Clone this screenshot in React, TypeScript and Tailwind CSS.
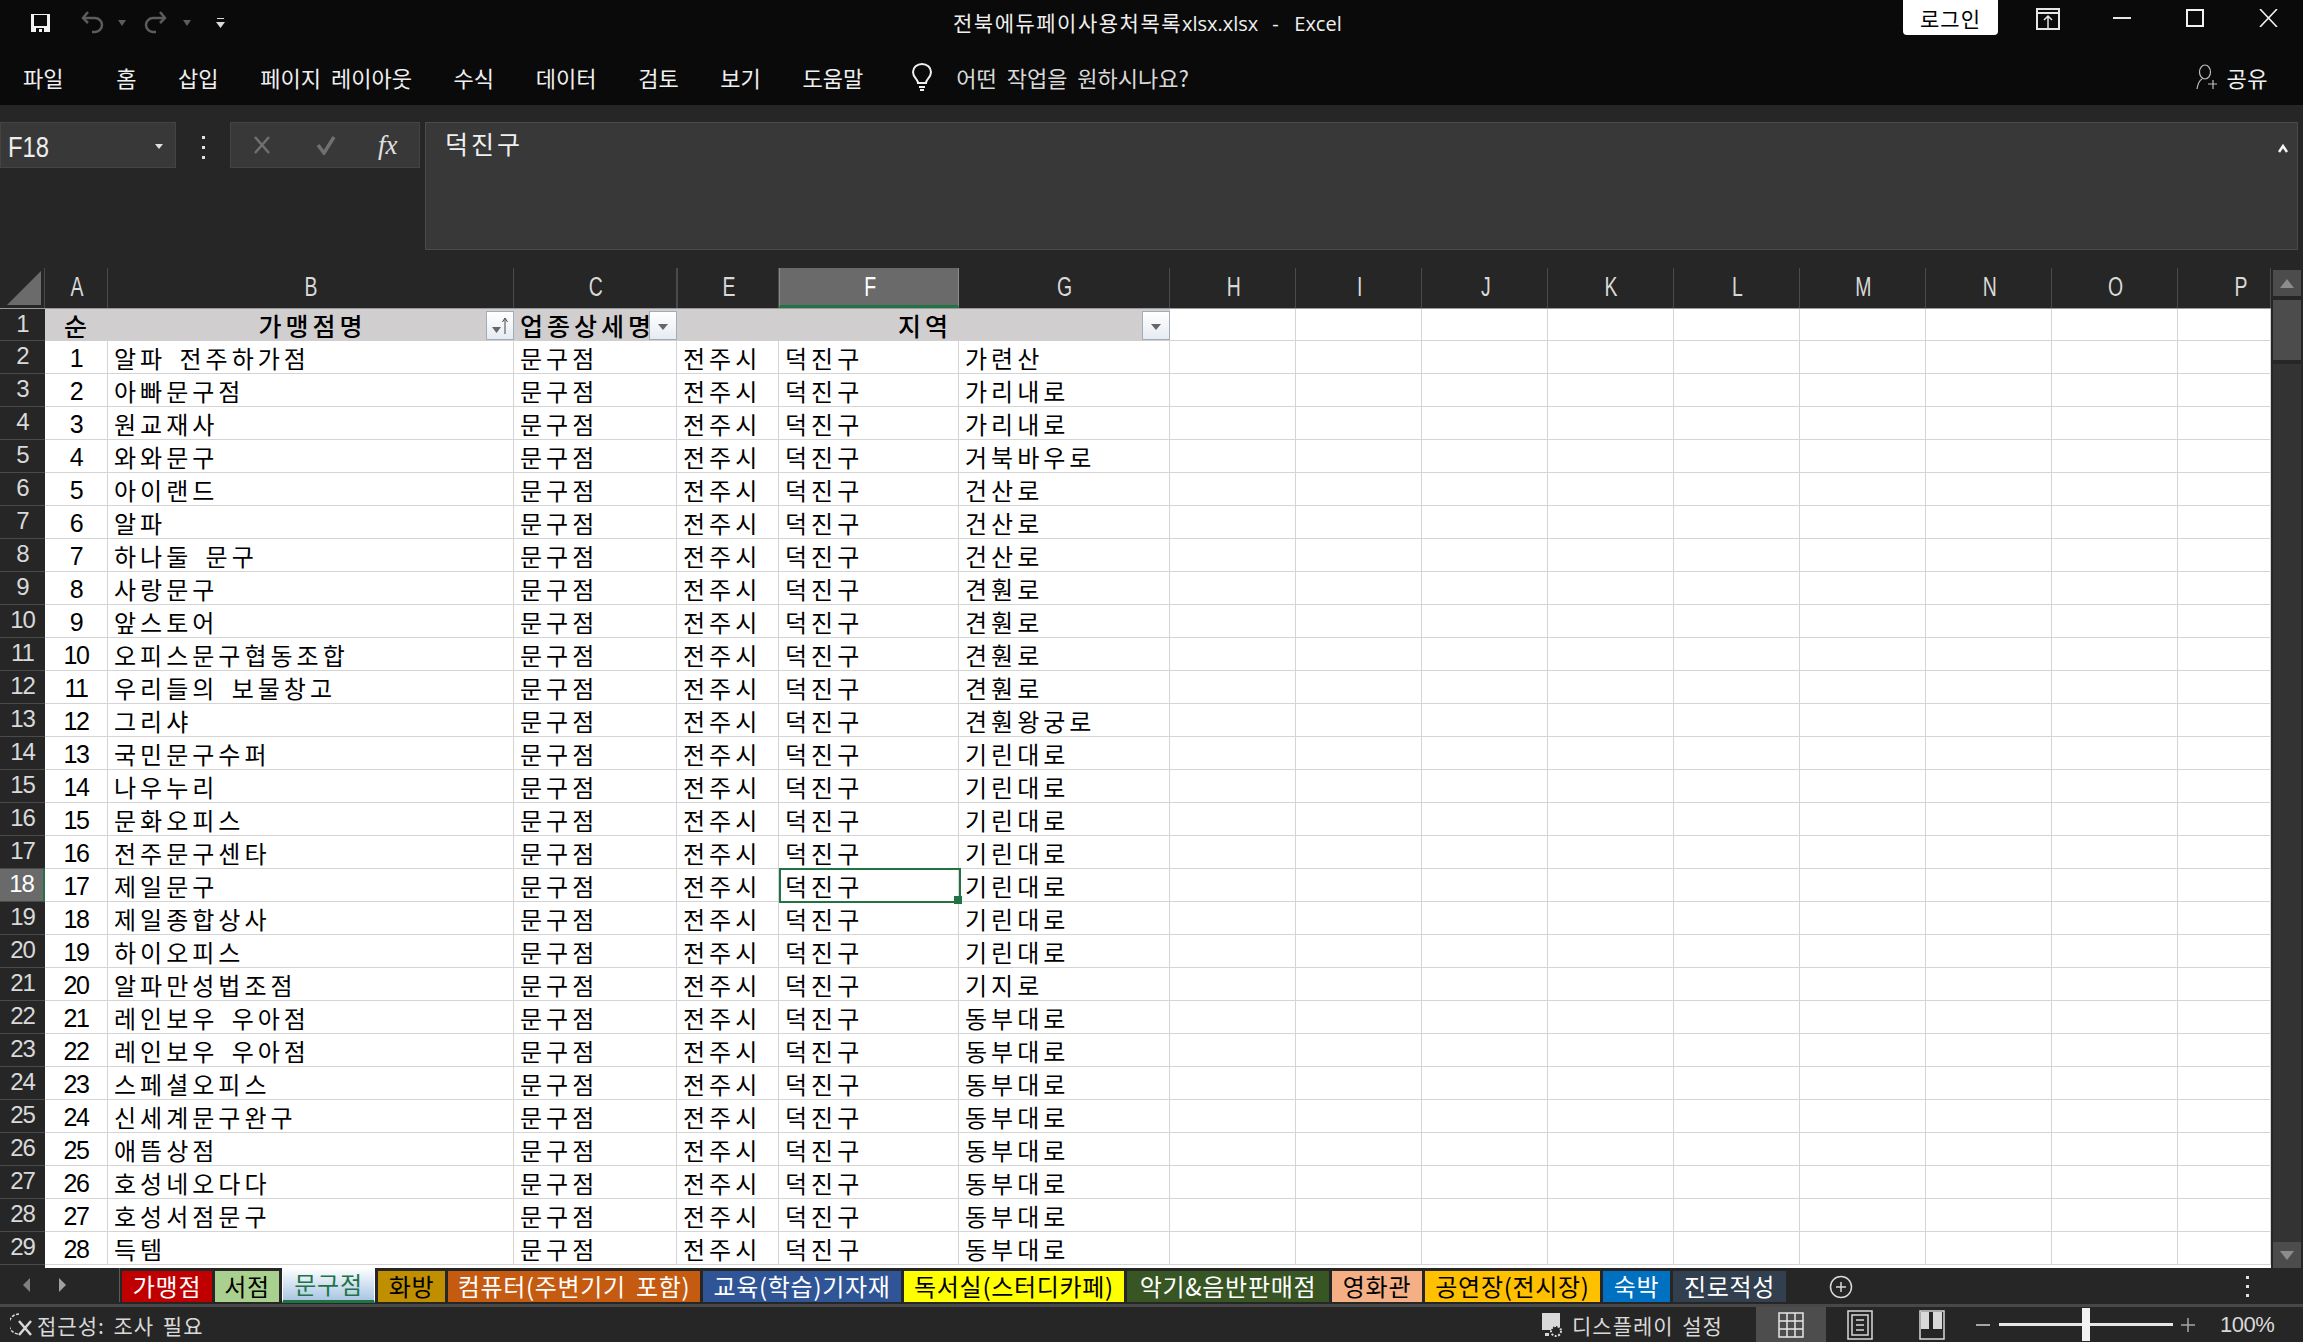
const menus = ["파일", "홈", "삽입", "페이지 레이아웃", "수식", "데이터", "검토", "보기", "도움말"];

const columns = [
  { label: "A", width: "w-[63px]" },
  { label: "B", width: "w-[406px]" },
  { label: "C", width: "w-[163px]" },
  { label: "E", width: "w-[102px]" },
  { label: "F", width: "w-[180px]" },
  { label: "G", width: "w-[211px]" },
  { label: "H", width: "w-[126px]" },
  { label: "I", width: "w-[126px]" },
  { label: "J", width: "w-[126px]" },
  { label: "K", width: "w-[126px]" },
  { label: "L", width: "w-[126px]" },
  { label: "M", width: "w-[126px]" },
  { label: "N", width: "w-[126px]" },
  { label: "O", width: "w-[126px]" },
  { label: "P", width: "w-[93px]" },
];

const emptyCols = columns.slice(6);

const rows: [string, string][] = [
  ["알파 전주하가점", "가련산"],
  ["아빠문구점", "가리내로"],
  ["원교재사", "가리내로"],
  ["와와문구", "거북바우로"],
  ["아이랜드", "건산로"],
  ["알파", "건산로"],
  ["하나둘 문구", "건산로"],
  ["사랑문구", "견훤로"],
  ["앞스토어", "견훤로"],
  ["오피스문구협동조합", "견훤로"],
  ["우리들의 보물창고", "견훤로"],
  ["그리샤", "견훤왕궁로"],
  ["국민문구수퍼", "기린대로"],
  ["나우누리", "기린대로"],
  ["문화오피스", "기린대로"],
  ["전주문구센타", "기린대로"],
  ["제일문구", "기린대로"],
  ["제일종합상사", "기린대로"],
  ["하이오피스", "기린대로"],
  ["알파만성법조점", "기지로"],
  ["레인보우 우아점", "동부대로"],
  ["레인보우 우아점", "동부대로"],
  ["스페셜오피스", "동부대로"],
  ["신세계문구완구", "동부대로"],
  ["애뜸상점", "동부대로"],
  ["호성네오다다", "동부대로"],
  ["호성서점문구", "동부대로"],
  ["득템", "동부대로"],
];

const tabs = [
  { name: "가맹점", cls: "w-[90px] bg-[#c00000] text-white" },
  { name: "서점", cls: "w-[64px] bg-[#a9d08e] text-black" },
  { name: "문구점", active: true, cls: "w-[93px] text-[#217346]" },
  { name: "화방", cls: "w-[67px] bg-[#bf8f00] text-black" },
  { name: "컴퓨터(주변기기 포함)", cls: "w-[252px] bg-[#c55a11] text-white" },
  { name: "교육(학습)기자재", cls: "w-[198px] bg-[#2f5597] text-white" },
  { name: "독서실(스터디카페)", cls: "w-[220px] bg-[#ffff00] text-black" },
  { name: "악기&음반판매점", cls: "w-[202px] bg-[#375623] text-white" },
  { name: "영화관", cls: "w-[90px] bg-[#f4b084] text-black" },
  { name: "공연장(전시장)", cls: "w-[175px] bg-[#ffc000] text-black" },
  { name: "숙박", cls: "w-[67px] bg-[#0070c0] text-white" },
  { name: "진로적성", cls: "w-[113px] bg-[#323f4f] text-white" },
];

function FilterButton({ sorted }: { sorted?: boolean }) {
  return (
    <div className="absolute right-0 top-[2px] flex h-[29px] w-[28px] items-center justify-center border border-[#a3abb8] bg-gradient-to-b from-white to-[#e6ebf2]">
      <svg width="20" height="22" viewBox="0 0 20 22" fill="none">
        {sorted ? (
          <>
            <path d="M2 12h9l-4.500 6z" fill="#666" />
            <path d="M15 19V4M12.500 7 15 3l2.500 4" stroke="#444" strokeWidth="1" />
          </>
        ) : (
          <path d="M5 9h10l-5 6z" fill="#666" />
        )}
      </svg>
    </div>
  );
}

function ColumnHeader() {
  return (
    <div className="flex h-[40px] shrink-0 items-stretch">
      <div className="flex w-[45px] items-end justify-end border-r border-[#4a4a4a] pb-[3px] pr-[3px]">
        <svg width="34" height="34" viewBox="0 0 34 34">
          <path d="M34 0v34H0z" fill="#6b6b6b" />
        </svg>
      </div>
      {columns.map((c) => (
        <div
          key={c.label}
          className={`${c.width} flex items-center justify-center font-['Liberation_Sans',sans-serif] text-[27px] leading-[34px] text-[#d9d9d9] ${
            c.label === "F"
              ? "border-x border-x-[#8a8a8a] border-b-[3px] border-b-[#217346] bg-[#6a6a6a] text-white"
              : "border-r border-[#4a4a4a] pb-[3px]"
          } ${c.label === "E" ? "border-l border-[#4a4a4a]" : ""} ${c.label === "P" ? "pl-[34px]" : "pl-[2px]"}`}
        >
          <span className="scale-x-[0.72]">{c.label}</span>
        </div>
      ))}
    </div>
  );
}

function RowNumber({ n, selected }: { n: number; selected?: boolean }) {
  return (
    <div
      className={`flex w-[45px] shrink-0 items-start justify-center border-b border-[#4a4a4a] font-['Liberation_Sans',sans-serif] text-[24px] leading-[29px] tracking-[-1px] ${
        selected
          ? "border-r-2 border-r-[#217346] bg-[#6a6a6a] text-white"
          : "bg-[#262626] text-[#d9d9d9]"
      }`}
    >
      {n}
    </div>
  );
}

function Cell({ width, children, center }: { width: string; children?: React.ReactNode; center?: boolean }) {
  return (
    <div
      className={`${width} flex shrink-0 items-center overflow-hidden whitespace-nowrap border-b border-r border-[#d4d4d4] pt-[2px] ${
        center ? "justify-center" : "pl-[6px]"
      }`}
    >
      {children}
    </div>
  );
}

function Sheet() {
  return (
    <div className="relative flex-1 overflow-hidden">
      <div className="flex h-[33px] border-t border-t-[#9a9a9a]">
        <RowNumber n={1} />
        <div className="flex flex-1 bg-white text-black">
          <div className="flex w-[1125px] text-[25px] font-medium leading-[30px] tracking-[4px]">
            <div className="flex w-[63px] items-center justify-center border-b border-[#d0cece] bg-[#d0cece] pl-[2px]">순</div>
            <div className="relative flex w-[406px] items-center justify-center bg-[#d0cece] pl-[3px]">
              가맹점명
              <FilterButton sorted />
            </div>
            <div className="relative flex w-[163px] items-center bg-[#d0cece] pl-[6px]">
              업종상세명
              <FilterButton />
            </div>
            <div className="relative flex w-[493px] items-center justify-center bg-[#d0cece] pl-[3px]">
              지역
              <FilterButton />
            </div>
          </div>
          {emptyCols.map((c) => (
            <Cell key={c.label} width={c.width} />
          ))}
        </div>
      </div>
      {rows.map(([name, road], i) => (
        <div key={i} className="flex h-[33px] text-[24px] leading-[30px] tracking-[4px] text-black [word-spacing:4px]">
          <RowNumber n={i + 2} selected={i + 2 === 18} />
          <div className="flex flex-1 bg-white">
            <Cell width="w-[63px]" center>
              <span className="font-['Liberation_Sans',sans-serif] text-[25px] tracking-[-1.500px]">{i + 1}</span>
            </Cell>
            <Cell width="w-[406px]">{name}</Cell>
            <Cell width="w-[163px]">문구점</Cell>
            <Cell width="w-[102px]">전주시</Cell>
            <Cell width="w-[180px]">덕진구</Cell>
            <Cell width="w-[211px]">{road}</Cell>
            {emptyCols.map((c) => (
              <Cell key={c.label} width={c.width} />
            ))}
          </div>
        </div>
      ))}
      <div className="flex h-[33px]">
        <RowNumber n={30} />
        <div className="flex-1 bg-white" />
      </div>
      {/* F18 selection */}
      <div className="absolute left-[779px] top-[560px] h-[35px] w-[182px] border-[2px] border-[#217346]">
        <div className="absolute -bottom-[3px] -right-[3px] h-[8px] w-[8px] bg-[#217346]" />
      </div>
    </div>
  );
}

function ScrollBar() {
  return (
    <div className="flex w-[32px] shrink-0 flex-col items-center bg-[#262626] pt-[2px]">
      <div className="flex h-[26px] w-[28px] items-center justify-center bg-[#4c4c4c]">
        <svg width="14" height="9" viewBox="0 0 14 9"><path d="M7 0l7 9H0z" fill="#8c8c8c" /></svg>
      </div>
      <div className="mt-[4px] h-[60px] w-[28px] bg-[#4c4c4c]" />
      <div className="mt-[4px] w-[28px] flex-1 bg-[#333333]" />
      <div className="flex h-[26px] w-[28px] items-center justify-center bg-[#4c4c4c]">
        <svg width="14" height="9" viewBox="0 0 14 9"><path d="M7 9l7-9H0z" fill="#8c8c8c" /></svg>
      </div>
    </div>
  );
}

function TitleBar() {
  return (
    <div className="flex h-[45px] items-center text-white">
      <div className="flex w-[953px] shrink-0 items-center pl-[30px]">
        <svg width="21" height="20" viewBox="0 0 21 20" fill="none">
          <path d="M1 1h19v18H1z" fill="#f2f2f2" />
          <path d="M4 2h13v11H4z" fill="#0a0a0a" />
          <path d="M6 15h8v4H6z" fill="#0a0a0a" />
          <path d="M9 16h3v3H9z" fill="#f2f2f2" />
        </svg>
        <svg className="ml-[29px]" width="24" height="28" viewBox="0 0 24 28" fill="none" stroke="#5c5c5c" strokeWidth="2.500">
          <path d="M3 9h12a6 6 0 0 1 0 14h-3" />
          <path d="M8 3 3 9l5 5" />
        </svg>
        <span className="ml-[14px] h-0 w-0 border-x-[4px] border-t-[6px] border-x-transparent border-t-[#5c5c5c]" />
        <svg className="ml-[18px]" width="24" height="28" viewBox="0 0 24 28" fill="none" stroke="#5c5c5c" strokeWidth="2.500">
          <path d="M21 9H9a6 6 0 0 0 0 14h3" />
          <path d="m16 3 5 6-5 5" />
        </svg>
        <span className="ml-[15px] h-0 w-0 border-x-[4px] border-t-[6px] border-x-transparent border-t-[#5c5c5c]" />
        <svg className="ml-[25px]" width="9" height="12" viewBox="0 0 9 12" fill="#d9d9d9">
          <path d="M1 1h7v1H1zM0 5h9L4.500 11z" />
        </svg>
      </div>
      <div className="whitespace-nowrap text-[21px] leading-[30px] tracking-[1.500px] text-[#efefef]">
        전북에듀페이사용처목록<span className="font-['Open_Sans',sans-serif] text-[20px] tracking-normal">xlsx.xlsx</span>
        <span className="ml-[14px] font-['Open_Sans',sans-serif] text-[20px]">-</span>
        <span className="ml-[14px] font-['Open_Sans',sans-serif] text-[20px] tracking-normal">Excel</span>
      </div>
      <div className="ml-auto flex h-full items-start">
        <div className="flex h-[35px] w-[95px] items-center justify-center rounded-b-[4px] bg-white text-[21px] leading-[30px] tracking-[1px] text-black">
          로그인
        </div>
        <svg className="ml-[38px] mt-[8px]" width="24" height="22" viewBox="0 0 24 22" fill="none" stroke="#e6e6e6" strokeWidth="2">
          <path d="M1 1h22v20H1zM1 5h22" />
          <path d="M12 21V9M8 12l4-4 4 4" strokeWidth="1.500" />
        </svg>
        <svg className="ml-[53px] mt-[17px]" width="18" height="2" viewBox="0 0 18 2"><path d="M0 0h18v2H0z" fill="#e6e6e6" /></svg>
        <svg className="ml-[55px] mt-[9px]" width="18" height="18" viewBox="0 0 18 18" fill="none" stroke="#f2f2f2" strokeWidth="2">
          <path d="M1 1h16v16H1z" />
        </svg>
        <svg className="ml-[55px] mr-[25px] mt-[9px]" width="19" height="18" viewBox="0 0 19 18" fill="none" stroke="#f2f2f2" strokeWidth="1.600">
          <path d="m1 0 17 18M18 0 1 18" />
        </svg>
      </div>
    </div>
  );
}

function MenuBar() {
  return (
    <div className="flex h-[60px] items-center pl-[23px] pt-[4px] text-[22px] leading-[30px] text-[#f0f0f0] [word-spacing:5px]">
      <div className="flex items-center gap-[41.700px]">
        {menus.map((m) => (
          <span key={m} className={m === "홈" ? "ml-[11px]" : ""}>
            {m}
          </span>
        ))}
      </div>
      <svg className="ml-[48px]" width="22" height="28" viewBox="0 0 22 28" fill="none" stroke="#f0f0f0" strokeWidth="2">
        <path d="M7 20c0-4-5-5-5-11a9 8 0 0 1 18 0c0 6-5 7-5 11z" />
        <path d="M8 24h6M9 27h4" />
      </svg>
      <span className="ml-[23px] text-[#d9d9d9]">어떤 작업을 원하시나요?</span>
      <div className="ml-auto mr-[35px] flex items-center gap-[9px]">
        <svg width="22" height="26" viewBox="0 0 22 26" fill="none" stroke="#bfbfbf" strokeWidth="1.200">
          <ellipse cx="9" cy="8" rx="5.500" ry="7" />
          <path d="M1 25c1-6 3-9 5-10M17 16v9M12 20h9" />
        </svg>
        <span className="tracking-[0.5px]">공유</span>
      </div>
    </div>
  );
}

function FormulaBar() {
  return (
    <div className="flex h-[163px] items-start bg-[#262626] pt-[17px]">
      <div className="flex h-[46px] w-[176px] items-center justify-between border border-[#444444] bg-[#383838] pl-[7px] pr-[12px] pt-[3px]">
        <span className="origin-left scale-x-[0.82] font-['Liberation_Sans',sans-serif] text-[29px] leading-[36px] text-[#ededed]">F18</span>
        <span className="h-0 w-0 border-x-[4px] border-t-[5px] border-x-transparent border-t-[#e0e0e0]" />
      </div>
      <div className="flex w-[54px] flex-col items-center gap-[7px] pt-[14px]">
        <span className="h-[3px] w-[3px] bg-[#e0e0e0]" />
        <span className="h-[3px] w-[3px] bg-[#e0e0e0]" />
        <span className="h-[3px] w-[3px] bg-[#e0e0e0]" />
      </div>
      <div className="flex h-[46px] w-[190px] items-center border border-[#444444] bg-[#383838]">
        <svg className="ml-[22px]" width="18" height="20" viewBox="0 0 18 20" fill="none" stroke="#707070" strokeWidth="2.500">
          <path d="m2 2 14 16M16 2 2 18" />
        </svg>
        <svg className="ml-[45px]" width="20" height="20" viewBox="0 0 20 20" fill="none" stroke="#707070" strokeWidth="3.500">
          <path d="m2 10 6 8L18 2" />
        </svg>
        <span className="ml-[42px] font-['Liberation_Serif',serif] text-[27px] leading-[32px] italic text-[#e0e0e0]">fx</span>
      </div>
      <div className="ml-[5px] mr-[5px] flex h-[128px] flex-1 justify-between border border-[#4a4a4a] bg-[#383838] pl-[19px] pr-[9px] pt-[2px] text-[25px] leading-[36px] text-[#f0f0f0]">
        <span className="tracking-[3px]">덕진구</span>
        <svg className="mt-[19px]" width="10" height="9" viewBox="0 0 10 9" fill="none" stroke="#f5f5f5" strokeWidth="2.500">
          <path d="m1 8 4-6 4 6" />
        </svg>
      </div>
    </div>
  );
}

function TabBar() {
  return (
    <div className="flex h-[36px] shrink-0 items-start bg-[#262626]">
      <div className="flex h-[34px] w-[120px] shrink-0 items-center border-r border-[#5a5a5a] pl-[23px]">
        <span className="h-0 w-0 border-y-[7px] border-r-[7px] border-y-transparent border-r-[#808080]" />
        <span className="ml-[29px] h-0 w-0 border-y-[7px] border-l-[7px] border-y-transparent border-l-[#a0a0a0]" />
      </div>
      <div className="flex items-start gap-[3px] pl-[2px] text-[24px] leading-[29px] tracking-[0.700px] [word-spacing:4px]">
        {tabs.map((t) =>
          t.active ? (
            <div
              key={t.name}
              className={`${t.cls} flex h-[35px] items-center justify-center border-x border-b-[3px] border-x-white border-b-[#217346] bg-gradient-to-b from-white to-[#a9c6e2] pb-[1px]`}
            >
              {t.name}
            </div>
          ) : (
            <div key={t.name} className={`${t.cls} mt-[3px] flex h-[31px] items-center justify-center whitespace-nowrap pb-[2px]`}>
              {t.name}
            </div>
          ),
        )}
      </div>
      <svg className="ml-[43px] mt-[7px]" width="24" height="24" viewBox="0 0 24 24" fill="none" stroke="#d9d9d9" strokeWidth="1.500">
        <circle cx="12" cy="12" r="10.500" />
        <path d="M12 7v10M7 12h10" />
      </svg>
      <div className="ml-[393px] flex flex-col gap-[6px] pt-[8px]">
        <span className="h-[3px] w-[3px] bg-[#e0e0e0]" />
        <span className="h-[3px] w-[3px] bg-[#e0e0e0]" />
        <span className="h-[3px] w-[3px] bg-[#e0e0e0]" />
      </div>
    </div>
  );
}

function StatusBar() {
  return (
    <div className="flex h-[38px] shrink-0 items-center border-t-[3px] border-[#484848] bg-[#262626] text-[21px] leading-[30px] text-[#d9d9d9]">
      <svg className="ml-[10px]" width="24" height="26" viewBox="0 0 24 26" fill="none" stroke="#d9d9d9" strokeWidth="1.500">
        <path d="M9 2a10 10 0 0 0 0 20" strokeDasharray="3 1.500" />
        <path d="m9 9 12 14M21 9 9 23" strokeWidth="2.500" />
      </svg>
      <span className="ml-[3px] tracking-[1px] [word-spacing:3px]">접근성: 조사 필요</span>
      <div className="ml-auto flex h-full items-center">
        <svg width="24" height="28" viewBox="0 0 24 28" fill="none">
          <path d="M1 2h18v17H1z" fill="#d9d9d9" />
          <circle cx="15" cy="20" r="5" stroke="#d9d9d9" strokeWidth="2" strokeDasharray="2 1.500" fill="#262626" />
          <path d="M4 22h4v3H4z" fill="#d9d9d9" />
        </svg>
        <span className="ml-[7px] w-[154px] whitespace-nowrap tracking-[1px] [word-spacing:3px]">디스플레이 설정</span>
        <div className="ml-[30px] flex h-full w-[70px] items-center justify-center bg-[#4d4d4d]">
          <svg width="26" height="26" viewBox="0 0 26 26" fill="none" stroke="#e6e6e6" strokeWidth="1.500">
            <path d="M1 1h24v24H1zM9 1v24M17 1v24M1 9h24M1 17h24" />
          </svg>
        </div>
        <svg className="ml-[21px]" width="26" height="30" viewBox="0 0 26 30" fill="none" stroke="#d9d9d9" strokeWidth="1.500">
          <path d="M1 1h24v28H1zM5 5h16v20H5zM9 10h8M9 15h8M9 20h8" />
        </svg>
        <svg className="ml-[46px]" width="26" height="30" viewBox="0 0 26 30" fill="none">
          <path d="M1 1h24v28H1z" stroke="#d9d9d9" strokeWidth="1.500" />
          <path d="M2 2h8v17H2zM14 2h9v17h-9z" fill="#d9d9d9" />
        </svg>
        <span className="ml-[31px] h-[2px] w-[14px] bg-[#a6a6a6]" />
        <div className="relative ml-[9px] h-[3px] w-[174px] bg-[#e6e6e6]">
          <div className="absolute left-[83px] top-[-15px] h-[33px] w-[8px] bg-[#f2f2f2]" />
        </div>
        <svg className="ml-[8px]" width="14" height="14" viewBox="0 0 14 14" stroke="#a6a6a6" strokeWidth="1.500">
          <path d="M7 0v14M0 7h14" />
        </svg>
        <span className="ml-[25px] mr-[30px] w-[53px] font-['Liberation_Sans',sans-serif] text-[22px] tracking-[-0.500px]">100%</span>
      </div>
    </div>
  );
}

export default function App() {
  return (
    <div className="flex h-[1342px] w-[2303px] flex-col overflow-hidden bg-[#262626] font-['Noto_Sans_CJK_KR',sans-serif]">
      <div className="h-[105px] shrink-0 bg-[#0a0a0a]">
        <TitleBar />
        <MenuBar />
      </div>
      <FormulaBar />
      <div className="flex min-h-0 flex-1">
        <div className="flex min-w-0 flex-1 flex-col">
          <ColumnHeader />
          <Sheet />
        </div>
        <ScrollBar />
      </div>
      <TabBar />
      <StatusBar />
    </div>
  );
}
